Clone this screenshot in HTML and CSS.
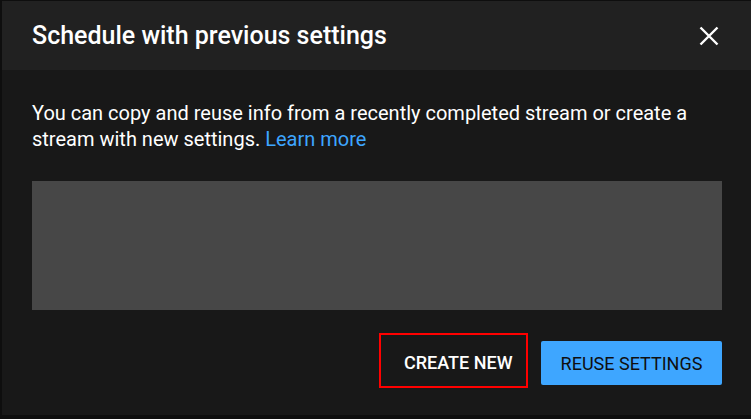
FILE: index.html
```html
<!DOCTYPE html>
<html lang="en">
<head>
<meta charset="utf-8">
<title>Schedule with previous settings</title>
<link rel="stylesheet" href="styles.css">
</head>
<body>
<div class="dialog">
  <header class="dialog-header">
    <h1 class="dialog-title">Schedule with previous settings</h1>
    <button class="close-btn" aria-label="Close">
      <svg width="24" height="24" viewBox="0 0 24 24"><path d="M3.5 3.5 L20.5 20.5 M20.5 3.5 L3.5 20.5" stroke="#fff" stroke-width="2.4" fill="none"/></svg>
    </button>
  </header>
  <main class="dialog-body">
    <p class="desc">You can copy and reuse info from a recently completed stream or create a stream with new settings. <a class="link" href="#">Learn more</a></p>
    <div class="placeholder"></div>
    <div class="footer">
      <div class="highlight">
        <button class="btn-text">CREATE NEW</button>
      </div>
      <button class="btn-primary">REUSE SETTINGS</button>
    </div>
  </main>
</div>
</body>
</html>
```
FILE: styles.css
```css
* { box-sizing: border-box; }
html, body {
  margin: 0;
  padding: 0;
  background: #0e0e0e;
}
body {
  width: 751px;
  height: 419px;
  overflow: hidden;
  font-family: Roboto, "Noto Sans", Arial, sans-serif;
  color: #fff;
}
.dialog {
  margin: 1px 0 0 2px;
  width: 749px;
  height: 414px;
  background: #181818;
  display: flex;
  flex-direction: column;
}
.dialog-header {
  height: 69px;
  background: #212121;
  display: flex;
  align-items: center;
  justify-content: space-between;
  padding: 0 30px 0 30px;
}
.dialog-title {
  margin: 0;
  font-size: 25px;
  font-weight: 500;
  letter-spacing: 0;
  padding-bottom: 1px;
}
.close-btn {
  background: none;
  border: 0;
  padding: 0;
  width: 24px;
  height: 24px;
  display: flex;
  cursor: pointer;
}
.dialog-body {
  flex: 1;
  padding: 30px 29px 0 30px;
  display: flex;
  flex-direction: column;
}
.desc {
  margin: 0;
  max-width: 675px;
  font-size: 20px;
  line-height: 26px;
  color: #fff;
}
.link {
  color: #3ea6ff;
  text-decoration: none;
}
.placeholder {
  margin-top: 29px;
  height: 129px;
  background: #474747;
}
.footer {
  margin-top: 23px;
  display: flex;
  justify-content: flex-end;
  align-items: flex-start;
  gap: 13px;
}
.highlight {
  border: 2px solid #ff0000;
  height: 55px;
  width: 149px;
  display: flex;
  align-items: center;
  padding: 4px 0 0 23px;
}
.btn-text {
  background: none;
  border: 0;
  padding: 0;
  color: #fff;
  font-family: inherit;
  font-size: 18px;
  font-weight: 500;
  cursor: pointer;
}
.btn-primary {
  margin-top: 8px;
  height: 44px;
  width: 181px;
  background: #3ea6ff;
  border: 0;
  border-radius: 2px;
  color: #0f0f0f;
  font-family: inherit;
  font-size: 18px;
  font-weight: 400;
  cursor: pointer;
}
```
